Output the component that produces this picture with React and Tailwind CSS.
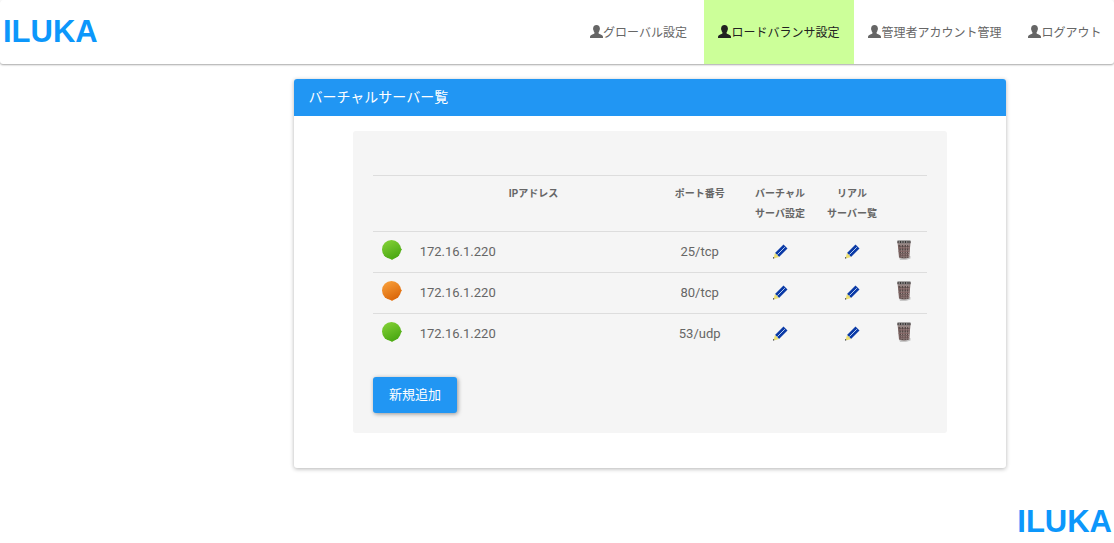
import React from "react";

const navItems = [
  { label: "グローバル設定", width: "w-[131px]" },
  { label: "ロードバランサ設定", width: "w-[150px]", active: true },
  { label: "管理者アカウント管理", width: "w-[162px]" },
  { label: "ログアウト", width: "w-[98px]" },
];

const servers = [
  { id: 1, ip: "172.16.1.220", port: "25/tcp", up: true },
  { id: 2, ip: "172.16.1.220", port: "80/tcp", up: false },
  { id: 3, ip: "172.16.1.220", port: "53/udp", up: true },
];

function Logo() {
  return (
    <span className="font-['Liberation_Sans',Arial,sans-serif] text-[31px] leading-9 font-bold text-[#0c97fb]">
      ILUKA
    </span>
  );
}

function UserIcon() {
  return (
    <svg className="mb-1 h-[13px] w-[13px] shrink-0" viewBox="0 0 13 13" fill="currentColor" aria-hidden="true">
      <path d="M6.5 0C8.7 0 9.9 1.3 9.8 3.3C10.1 3.6 10 4.6 9.6 4.9C9.4 6 9 6.8 8.6 7.3V8.4C9.2 9.3 12.4 9.6 12.8 11C13 11.7 13 12.3 13 13H0C0 12.3 0 11.7 .2 11C.6 9.6 3.8 9.3 4.4 8.4V7.3C4 6.8 3.6 6 3.4 4.9C3 4.6 2.9 3.6 3.2 3.3C3.1 1.3 4.3 0 6.5 0Z" />
    </svg>
  );
}

function StatusIcon({ up }) {
  const id = up ? "status-up" : "status-down";
  return (
    <svg className="h-5 w-5" viewBox="0 0 20 20" role="img" aria-label={up ? "稼働" : "停止"}>
      <defs>
        <linearGradient id={id} x1="0.2" y1="0" x2="0.7" y2="1">
          <stop offset="0" stopColor={up ? "#83d136" : "#f9a03a"} />
          <stop offset="1" stopColor={up ? "#48a611" : "#d96408"} />
        </linearGradient>
      </defs>
      <path d="M17 6L20 9.5L18 12ZM7 18L10 20L13 18Z" fill={up ? "#58b51d" : "#e77b1b"} />
      <circle cx="9.5" cy="9.5" r="9.5" fill={`url(#${id})`} />
    </svg>
  );
}

function PencilIcon() {
  return (
    <svg className="h-4 w-4" viewBox="0 0 16 16" aria-hidden="true">
      <path d="M11.5 .5L15.5 4.5L7 13L3 9Z" fill="#0b3aa6" />
      <path d="M12.8 3.2L5.4 10.6" stroke="#b5cdf0" strokeWidth="1" fill="none" />
      <path d="M3 9L7 13L2.8 14.2L1.8 13.2Z" fill="#ecdf72" />
      <path d="M1 13.2H2.2V14.4H1Z" fill="#333333" />
    </svg>
  );
}

function TrashIcon() {
  return (
    <svg className="h-5 w-4" viewBox="0 0 16 20" aria-hidden="true">
      <path d="M3 17L14.5 16V18.5L10 20H4Z" fill="#c8c8c8" />
      <path d="M1.5 1.5L14.5 1.5L13.3 17.5Q8 19.5 3 17.5Z" fill="#75615f" />
      <path d="M3.8 5L5 17M6.6 5L6.8 18M9.3 5V18M11.8 5L11.3 17.5" stroke="#4d4342" strokeWidth="1" strokeDasharray="2 1" />
      <path d="M5 5L5.9 17M7.9 5V18M10.6 5L10.2 18M12.9 5L12.4 17" stroke="#b9a4a3" strokeWidth=".8" strokeDasharray="1 1.3" />
      <path d="M2 8H13.5M2.5 11.5H13.3M3 15H13" stroke="#8e6c6c" strokeWidth=".7" />
      <path d="M1.5 .6H14.5V3.2H1.5Z" fill="#3a3636" />
      <path d="M2.5 2H13.5" stroke="#c9c9c9" strokeWidth="1" strokeDasharray="1.5 1" />
      <path d="M2 4H13.8" stroke="#d2cccc" strokeWidth=".7" fill="none" />
    </svg>
  );
}

function IconButton({ label, children }) {
  return (
    <button type="button" aria-label={label} className="inline-flex cursor-pointer">
      {children}
    </button>
  );
}

export default function App() {
  return (
    <div className="bg-white font-[Roboto,'Noto_Sans_CJK_JP',sans-serif] text-[13px] leading-6 text-[#666666]">
      <header className="flex h-16 items-stretch justify-between rounded-[3px] bg-white shadow-[0_1px_2px_rgba(0,0,0,0.35)]">
        <a href="#" className="flex items-center pl-[3px]">
          <Logo />
        </a>
        <nav className="flex">
          {navItems.map((item) => (
            <a
              key={item.label}
              href="#"
              className={`flex items-center justify-center pt-0.5 text-xs whitespace-nowrap ${item.width} ${
                item.active ? "bg-[#ccff99] text-[#212121]" : ""
              }`}
            >
              <UserIcon />
              {item.label}
            </a>
          ))}
        </nav>
      </header>

      <main className="ml-[25%] w-2/3 px-[15px] pt-[15px]">
        <section className="rounded-[3px] bg-white pb-[35px] shadow-[0_1px_4px_rgba(0,0,0,0.3)]">
          <h1 className="rounded-t-[3px] bg-[#2196f3] px-[15px] pt-2 pb-[9px] text-sm leading-5 font-normal text-white">
            バーチャルサーバー覧
          </h1>
          <div className="mx-auto mt-[15px] w-5/6 rounded-[3px] bg-[#f5f5f5] px-5 pt-11 pb-5">
            <table className="w-full table-fixed border-separate border-spacing-0 [&_td]:border-t [&_td]:border-[#dddddd] [&_th]:border-t [&_th]:border-[#dddddd]">
              <colgroup>
                <col className="w-[7%]" />
                <col className="w-[44%]" />
                <col className="w-[16%]" />
                <col className="w-[13%]" />
                <col className="w-[13%]" />
                <col className="w-[7%]" />
              </colgroup>
              <thead>
                <tr className="align-top text-[10px] leading-5 font-bold">
                  <td />
                  <th scope="col" className="pt-2 pb-[7px]">IPアドレス</th>
                  <th scope="col" className="pt-2 pb-[7px]">ポート番号</th>
                  <th scope="col" className="pt-2 pb-[7px]">バーチャル<br />サーバ設定</th>
                  <th scope="col" className="pt-2 pb-[7px]">リアル<br />サーバー覧</th>
                  <td />
                </tr>
              </thead>
              <tbody>
                {servers.map((server) => (
                  <tr key={server.id} className="h-[41px] text-center">
                    <td className="pb-1">
                      <span className="flex pl-[9px]">
                        <StatusIcon up={server.up} />
                      </span>
                    </td>
                    <td className="px-2 text-left">{server.ip}</td>
                    <td>{server.port}</td>
                    <td>
                      <span className="flex justify-center">
                        <IconButton label="バーチャルサーバ設定">
                          <PencilIcon />
                        </IconButton>
                      </span>
                    </td>
                    <td>
                      <span className="flex justify-center">
                        <IconButton label="リアルサーバー覧">
                          <PencilIcon />
                        </IconButton>
                      </span>
                    </td>
                    <td className="pb-1">
                      <span className="flex pl-2">
                        <IconButton label="削除">
                          <TrashIcon />
                        </IconButton>
                      </span>
                    </td>
                  </tr>
                ))}
              </tbody>
            </table>
            <button
              type="button"
              className="mt-[23px] block cursor-pointer rounded-[3px] bg-[#2196f3] px-4 py-1.5 text-white shadow-[1px_1px_4px_rgba(0,0,0,0.4)]"
            >
              新規追加
            </button>
          </div>
        </section>
      </main>

      <footer className="flex justify-end pt-9 pr-0.5">
        <Logo />
      </footer>
    </div>
  );
}
